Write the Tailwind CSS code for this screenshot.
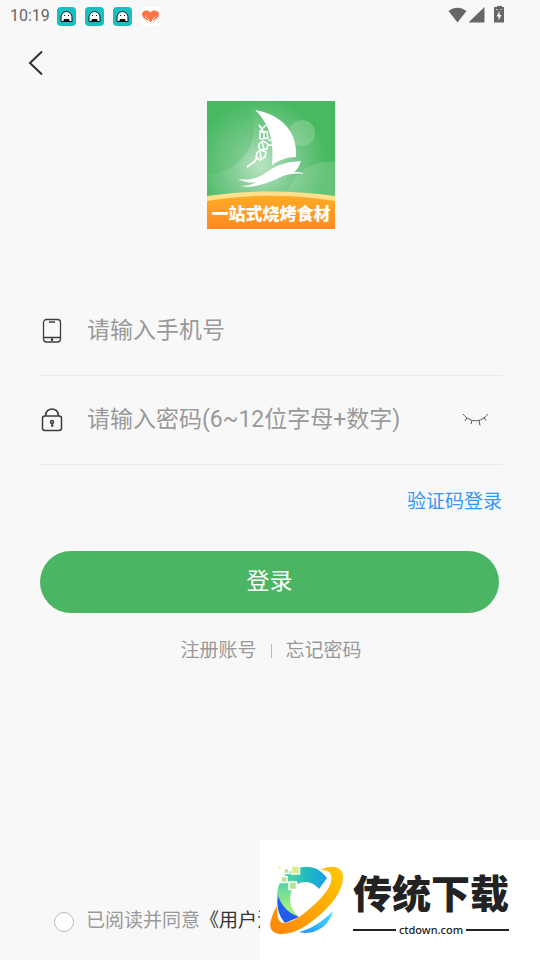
<!DOCTYPE html>
<html lang="zh-CN">
<head>
    <meta charset="UTF-8">
    <meta name="viewport" content="width=device-width, initial-scale=1.0">
    <script src="https://cdn.jsdelivr.net/npm/@tailwindcss/browser@4"></script>
    <title>登录</title>
</head>
<body class="bg-[#f8f8f8] font-[Roboto,'Noto_Sans_CJK_SC',sans-serif]">
    <div class="relative flex min-h-screen flex-col overflow-hidden">

        <!-- status bar -->
        <header class="flex h-8 items-center justify-between pl-[10px] pr-[35px] text-[#666]">
            <div class="flex items-center gap-[9px]">
                <span class="-mr-[2px] text-base">10:19</span>
                <svg width="19" height="19" viewBox="0 0 19 19">
                    <rect width="19" height="19" rx="4" fill="#16bfc0"/>
                    <path d="M4 14.500V11C4 2.500 15 2.500 15 11v3.500z" fill="#fff" stroke="#111"/>
                    <path d="M6 15l1-3h5l1 3zM7 8h1v1H7zM11 8h1v1h-1z" fill="#111"/>
                </svg>
                <svg width="19" height="19" viewBox="0 0 19 19">
                    <rect width="19" height="19" rx="4" fill="#16bfc0"/>
                    <path d="M4 14.500V11C4 2.500 15 2.500 15 11v3.500z" fill="#fff" stroke="#111"/>
                    <path d="M6 15l1-3h5l1 3zM7 8h1v1H7zM11 8h1v1h-1z" fill="#111"/>
                </svg>
                <svg width="19" height="19" viewBox="0 0 19 19">
                    <rect width="19" height="19" rx="4" fill="#16bfc0"/>
                    <path d="M4 14.500V11C4 2.500 15 2.500 15 11v3.500z" fill="#fff" stroke="#111"/>
                    <path d="M6 15l1-3h5l1 3zM7 8h1v1H7zM11 8h1v1h-1z" fill="#111"/>
                </svg>
                <svg width="19" height="19" viewBox="0 0 19 19">
                    <rect width="19" height="19" rx="2" fill="#fff"/>
                    <path d="M9.500 15C5 12.500 1 10.500 1 7.500c0-4.500 6-5 8.500-2C12 2.500 18 3 18 7.500c0 3-4 5-8.500 7.500z" fill="#fb7545"/>
                    <path d="M4.500 9.500l3 3 .5 4M14.500 9.500l-3 3-.5 4" fill="none" stroke="#fff3e6"/>
                    <path d="M2 11l5 5M17 11l-5 5" stroke="#fbc9a4"/>
                </svg>
            </div>
            <svg width="57" height="20" viewBox="0 0 57 20" fill="#666">
                <path d="M.500 5C6 .500 13 .500 18.500 5L9.500 16.500z"/>
                <path d="M36.500 1v15.500h-16z"/>
                <path d="M47 1h2V0h5v1h2v15.500H46V1z"/>
                <path d="M51.500 5L48.500 10.500h2v4l3-5.500h-2z" fill="#fff"/>
                <path d="M48 3h1.500v1H48zM52.500 3H54v1h-1.500z" fill="#ccc"/>
            </svg>
        </header>

        <nav class="flex h-[62px] items-center pl-5">
            <button type="button" aria-label="返回" class="flex size-8 items-center justify-center">
                <svg width="16" height="26" viewBox="0 0 16 26" fill="none" stroke="#303030" stroke-width="2">
                    <path d="M14 1.500L2 13l12 11.500"/>
                </svg>
            </button>
        </nav>

        <main class="flex grow flex-col pt-[7px] pb-[27px]">
            <!-- app logo -->
            <div class="flex justify-center pl-[2px]">
                <svg width="128" height="128" viewBox="0 0 128 128" role="img">
                    <defs>
                        <radialGradient id="glow" cx="54" cy="64" r="66" gradientUnits="userSpaceOnUse">
                            <stop offset="0" stop-color="#b9e3c3"/>
                            <stop offset=".5" stop-color="#7dcb90"/>
                            <stop offset="1" stop-color="#48b961"/>
                        </radialGradient>
                        <linearGradient id="band" x1="0" y1="0" x2="0" y2="1">
                            <stop offset="0" stop-color="#ffab25"/>
                            <stop offset="1" stop-color="#ff8a24"/>
                        </linearGradient>
                    </defs>
                    <rect width="128" height="128" fill="url(#glow)"/>
                    <path d="M0 0h38c12 16 12 42-2 56C28 66 16 72 0 74z" fill="#4aba62" opacity=".3"/>
                    <circle cx="95" cy="32" r="13" fill="#a6dcae" opacity=".4"/>
                    <path d="M128 61c-18-2-36 7-44 22l-8 14h52z" fill="#b7e4bd" opacity=".25"/>
                    <path d="M48 9C74 13 91 31 89 56c-9 0-17 3-24 8 2-20-1-40-17-55z" fill="#fff"/>
                    <path d="M31 78c11 2 21-1 29-7 11-8 20-10 34-11-2 6-4 9-7 11 4 0 7 0 10 2-9-1-15 0-21 2-13 6-28 13-43 10 6 0 12-1 17-4-7 1-14 0-19-3z" fill="#fff"/>
                    <!-- skewer hanging off the mast -->
                    <g fill="none" stroke="#fff">
                        <path d="M52 24l3 4v4M51 56l-4 5-7 5" stroke-width="2"/>
                        <path d="M55 28l4-4M53 30l7 1 1 6-8 1zM57 31v6M61 39h6v5h-6" stroke-width="1.500"/>
                        <path d="M52 43l4-3 5 3-1 5-5 1-3-2zM55 41l2 7M50 52l3-3 6 2-1 5-5 3-4-3zM53 50l1 7" stroke-width="1.500"/>
                    </g>
                    <path d="M0 95c42-6 86-6 128 0v8H0z" fill="#fee08d"/>
                    <path d="M0 100c42-7 86-7 128 0v28H0z" fill="url(#band)"/>
                    <text x="64" y="119" text-anchor="middle" fill="#fff" class="font-['Noto_Sans_CJK_SC',sans-serif] text-[17px] font-black">一站式烧烤食材</text>
                </svg>
            </div>

            <form class="mt-[58px] pl-10 pr-[38px]">
                <div class="flex h-[89px] items-center border-b border-[#ebebeb]">
                    <label for="phone" aria-label="手机号" class="mr-[23px] shrink-0">
                        <svg width="24" height="26" viewBox="0 0 24 26" fill="none" stroke="#3c3c3c" stroke-width="1.300">
                            <rect x="3.500" y="1.500" width="17" height="22.500" rx="3"/>
                            <path d="M3.500 19.500h17M9 4h6"/>
                            <circle cx="12" cy="21.700" r=".7" fill="#3c3c3c"/>
                        </svg>
                    </label>
                    <input id="phone" type="tel" placeholder="请输入手机号" class="min-w-0 grow text-[23px] leading-8 placeholder:text-[#999] outline-none">
                </div>
                <div class="flex h-[89px] items-center border-b border-[#ebebeb]">
                    <label for="password" aria-label="密码" class="mr-[23px] shrink-0">
                        <svg width="24" height="26" viewBox="0 0 24 26" fill="none" stroke="#3c3c3c" stroke-width="1.500">
                            <rect x="2.500" y="9" width="19" height="14.500" rx="2.500"/>
                            <path d="M5.500 9c0-9.500 13-9.500 13 0"/>
                            <circle cx="12" cy="15" r="1.500"/>
                            <path d="M12 16.500V20M12 18.500h1.500"/>
                        </svg>
                    </label>
                    <input id="password" type="password" placeholder="请输入密码(6~12位字母+数字)" class="min-w-0 grow text-[23px] leading-8 placeholder:text-[#999] outline-none">
                    <button type="button" aria-label="显示密码" class="mr-[13px] shrink-0">
                        <svg width="27" height="14" viewBox="0 0 27 14" fill="none" stroke="#555" stroke-width="1">
                            <path d="M1 1c7 9 18 9 25 0M5 5l-2 3M10 7.500L9 11M17 7.500l1 5M22 4.500l2 3"/>
                        </svg>
                    </button>
                </div>
                <div class="mt-[21px] flex justify-end text-[19px] leading-8">
                    <a href="#" class="text-[#3296fa]">验证码登录</a>
                </div>
                <div class="mt-[33px]">
                    <div class="pr-[3px]">
                        <button type="submit" class="h-[62px] w-full rounded-full bg-[#4ab563] pb-px text-[23px] leading-8 text-white">登录</button>
                    </div>
                    <div class="mt-[22px] flex items-center justify-center text-[19px] leading-8 text-[#999]">
                        <a href="#">注册账号</a>
                        <span class="mx-[14px] h-[14px] w-px bg-[#bbb]"></span>
                        <a href="#">忘记密码</a>
                    </div>
                </div>
            </form>

            <div class="mt-auto flex items-center pl-[54px] text-[19px] leading-6 text-[#999]">
                <input id="agree" type="checkbox" class="mr-3 size-5 translate-y-px appearance-none rounded-full border border-[#bbb] bg-white">
                <label for="agree">已阅读并同意</label>
                <a href="#" class="text-[#333]">《用户注</a>
            </div>
        </main>

        <!-- site banner over the corner -->
        <aside class="absolute right-0 bottom-0 flex h-[120px] w-[280px] items-start bg-white">
            <svg class="ml-[9px] mt-[22px] shrink-0" width="76" height="78" viewBox="0 0 76 78">
                <defs>
                    <linearGradient id="ring" x1="1" y1="0" x2="0" y2="1">
                        <stop offset="0" stop-color="#ffc900"/>
                        <stop offset="1" stop-color="#ff850a"/>
                    </linearGradient>
                    <linearGradient id="arc" x1="0" y1="0" x2="1" y2="0">
                        <stop offset="0" stop-color="#6bdfa0"/>
                        <stop offset=".5" stop-color="#22bdbb"/>
                        <stop offset="1" stop-color="#18a0e8"/>
                    </linearGradient>
                    <linearGradient id="side" x1="0" y1="0" x2="0" y2="1">
                        <stop offset="0" stop-color="#35c5b0"/>
                        <stop offset=".7" stop-color="#a0f080"/>
                    </linearGradient>
                    <linearGradient id="tail" x1="0" y1="1" x2="1" y2="0">
                        <stop offset="0" stop-color="#2692f8"/>
                        <stop offset="1" stop-color="#43e2ff"/>
                    </linearGradient>
                </defs>
                <path d="M18 11C33 1 49 3 58 16l-8 11C42 17 28 18 23 28l-9-8z" fill="url(#arc)"/>
                <path d="M19 10C5 22 5 42 16 60l14-5c-9-8-11-18-7-27l5-6z" fill="url(#side)"/>
                <path d="M9 34c-2 11 1 20 7 27l14-6C19 51 13 44 9 34z" fill="#245deb"/>
                <path d="M51 8C63 2 74 4 74 15c0 12-9 25-21 36C40 63 26 72 13 72 4 72-2 67 3 55c1-4 3-8 5-11 0 10 1 16 6 17 10 0 23-10 36-23 9-9 14-18 12-25-1-4-5-5-11-5z" fill="url(#ring)"/>
                <path d="M64 49C60 64 46 74 30 70c12-3 23-10 34-21z" fill="url(#tail)"/>
                <g stroke="#fff" stroke-width="1.500">
                    <path d="M22.500 4h8v8h-8z" fill="#dced8b"/>
                    <path d="M15 6.500h5v5h-5z" fill="#bde680"/>
                    <path d="M12 14.500h6v6h-6z" fill="#b3e781"/>
                    <path d="M20 20h7.500v7.500H20z" fill="#b2e68b"/>
                    <path d="M8.500 3.500h4v4h-4z" fill="#e8f0a5"/>
                </g>
            </svg>
            <div class="ml-2 mt-[21px] w-[156px] font-['Noto_Sans_CJK_SC',sans-serif] text-[#222]">
                <p class="text-[39px] leading-[60px] font-black whitespace-nowrap">传统下载</p>
                <div class="mt-px flex items-center gap-[3px]">
                    <span class="h-[2px] grow bg-[#222]"></span>
                    <span class="font-['Noto_Sans',sans-serif] text-[11px] leading-4 font-medium">ctdown.com</span>
                    <span class="h-[2px] grow bg-[#222]"></span>
                </div>
            </div>
        </aside>
    </div>
</body>
</html>
